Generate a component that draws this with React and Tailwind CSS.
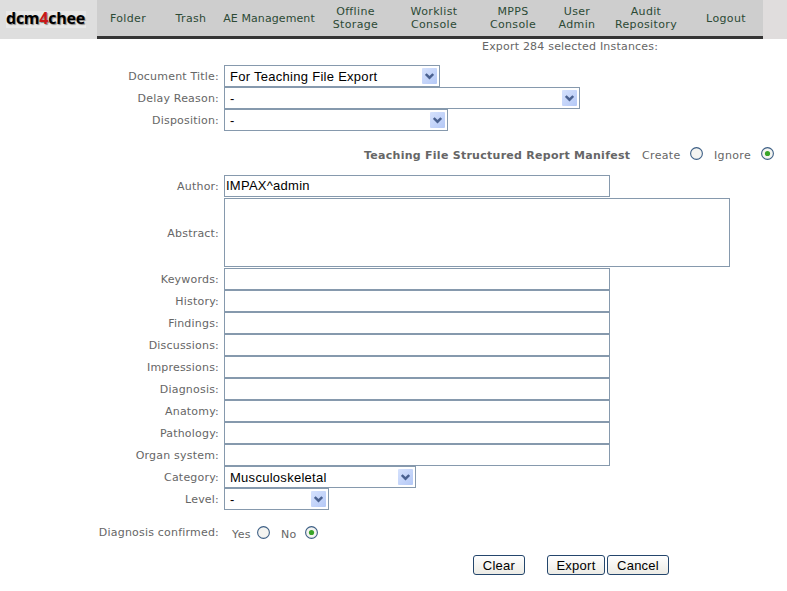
import React from "react";

const NAV = [
  { lines: ["Folder"], width: "w-[62px]" },
  { lines: ["Trash"], width: "w-[64px]" },
  { lines: ["AE Management"], width: "w-[92px] tracking-[0.1px]" },
  { lines: ["Offline", "Storage"], width: "w-[81px]" },
  { lines: ["Worklist", "Console"], width: "w-[76px]" },
  { lines: ["MPPS", "Console"], width: "w-[82px]" },
  { lines: ["User", "Admin"], width: "w-[46px]" },
  { lines: ["Audit", "Repository"], width: "w-[92px]" },
  { lines: ["Logout"], width: "w-[68px]" },
];

const FIELDS = [
  "Keywords:",
  "History:",
  "Findings:",
  "Discussions:",
  "Impressions:",
  "Diagnosis:",
  "Anatomy:",
  "Pathology:",
  "Organ system:",
];

function Label({ children }) {
  return <div className="w-[219px] shrink-0 text-right">{children}</div>;
}

function Row({ label, children }) {
  return (
    <div className="flex h-[22px] items-center gap-[5px]">
      <Label>{label}</Label>
      {children}
    </div>
  );
}

function Select({ width, children }) {
  return (
    <div className={`flex h-[22px] items-center justify-between border border-[#8699ad] bg-white pr-[2px] pl-[5px] ${width}`}>
      <span className="pt-px font-['Liberation_Sans',Arial,sans-serif] text-[13px] leading-[19px] tracking-[0.28px] text-black">{children}</span>
      <span className="flex h-4 w-[15px] items-center justify-center rounded-[1px] bg-linear-to-br from-[#d6e2fd] to-[#b4c8f6]">
        <svg width="9" height="7" viewBox="0 0 9 7" className="block">
          <path d="M0.8 1 L4.5 4.7 L8.2 1" fill="none" stroke="#4a6190" strokeWidth="2.4" />
        </svg>
      </span>
    </div>
  );
}

function Input({ children }) {
  return (
    <div className="h-[22px] w-[386px] border border-[#8699ad] bg-white pl-px font-['Liberation_Sans',Arial,sans-serif] text-[13px] leading-[19px] tracking-[0.25px] text-black">
      {children}
    </div>
  );
}

function Radio({ checked }) {
  return (
    <svg width="13" height="13" viewBox="0 0 13 13" className="block shrink-0">
      <circle cx="6.5" cy="6.5" r="5.9" fill="#f4f4f1" stroke="#3d5f85" strokeWidth="1.1" />
      {checked && <circle cx="6.5" cy="6.5" r="2.6" fill="#38a428" />}
    </svg>
  );
}

function Button({ width, children }) {
  return (
    <button className={`h-[20px] rounded-[3px] border border-[#24466c] bg-linear-to-b from-white to-[#ecebe5] text-center font-['Liberation_Sans',Arial,sans-serif] text-[13px] leading-[19px] tracking-[0.25px] text-black ${width}`}>
      {children}
    </button>
  );
}

export default function App() {
  return (
    <div className="h-[591px] w-[787px] overflow-hidden bg-white font-['DejaVu_Sans',Verdana,sans-serif] text-[11px] leading-[13px] tracking-[0.2px] text-[#666666]">
      <header className="flex h-[39px] bg-[#e0dddd]">
        <div className="flex w-[97px] items-center bg-[#dedede] pl-[6px]">
          <div className="h-[17px] w-20 bg-[#e8e8e8] font-['Open_Sans','Noto_Sans',sans-serif] text-[16px] leading-[15px] font-bold tracking-[-0.25px] whitespace-nowrap text-black [text-shadow:1px_1px_1px_#888]">
            dcm<span className="text-[#c81818]">4</span>chee
          </div>
        </div>
        <nav className="flex w-[666px] items-center border-b-[3px] border-[#353535] bg-[#cecece] text-center tracking-[0.35px] text-[#2c4a35]">
          {NAV.map((item) => (
            <a key={item.lines.join(" ")} className={`shrink-0 whitespace-nowrap ${item.width}`}>
              {item.lines.map((line) => (
                <span key={line} className="block">{line}</span>
              ))}
            </a>
          ))}
        </nav>
      </header>

      <main>
        <p className="h-[26px] pt-px pl-[482px] whitespace-nowrap">Export 284 selected Instances:</p>

        <Row label="Document Title:"><Select width="w-[216px]">For Teaching File Export</Select></Row>
        <Row label="Delay Reason:"><Select width="w-[356px]">-</Select></Row>
        <Row label="Disposition:"><Select width="w-[224px]">-</Select></Row>

        <div className="flex h-[44px] items-center pt-[5px] pl-[364px] whitespace-nowrap">
          <b className="w-[278px] tracking-[0.27px]">Teaching File Structured Report Manifest</b>
          <span className="w-[48px] tracking-[0.35px]">Create</span>
          <span className="-mt-[5px]"><Radio /></span>
          <span className="ml-[11px] w-[47px] tracking-[0.35px]">Ignore</span>
          <span className="-mt-[5px]"><Radio checked /></span>
        </div>

        <Row label="Author:"><Input>IMPAX^admin</Input></Row>
        <div className="flex h-[71px] items-center gap-[5px]">
          <Label><span className="block pt-px">Abstract:</span></Label>
          <div className="h-[69px] w-[506px] border border-[#8699ad]" />
        </div>
        {FIELDS.map((label) => (
          <Row key={label} label={label}><Input /></Row>
        ))}
        <Row label="Category:"><Select width="w-[192px]">Musculoskeletal</Select></Row>
        <Row label="Level:"><Select width="w-[105px]">-</Select></Row>

        <div className="mt-[11px] flex h-[22px] items-center whitespace-nowrap">
          <Label>Diagnosis confirmed:</Label>
          <span className="ml-[13px] w-[25px] pt-[5px] tracking-[0.4px]">Yes</span>
          <Radio />
          <span className="ml-[11px] w-[24px] pt-[5px]">No</span>
          <Radio checked />
        </div>

        <div className="mt-[12px] flex pl-[473px]">
          <Button width="w-[52px]">Clear</Button>
          <span className="w-[22px]" />
          <Button width="w-[58px]">Export</Button>
          <span className="w-[2px]" />
          <Button width="w-[62px]">Cancel</Button>
        </div>
      </main>
    </div>
  );
}
